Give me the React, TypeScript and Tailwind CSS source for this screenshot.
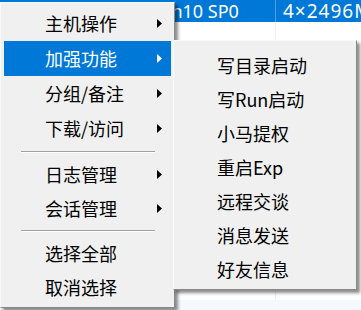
type Item = { label: string; sub?: boolean; active?: boolean } | "sep";

const mainItems: Item[] = [
  { label: "主机操作", sub: true },
  { label: "加强功能", sub: true, active: true },
  { label: "分组/备注", sub: true },
  { label: "下载/访问", sub: true },
  "sep",
  { label: "日志管理", sub: true },
  { label: "会话管理", sub: true },
  "sep",
  { label: "选择全部" },
  { label: "取消选择" },
];

const subItems = ["写目录启动", "写Run启动", "小马提权", "重启Exp", "远程交谈", "消息发送", "好友信息"];

function Arrow({ white }: { white?: boolean }) {
  return (
    <svg width="5" height="9" viewBox="0 0 5 9" className="ml-auto mr-[9px]">
      <path d="M0 0 L5 4.5 L0 9 Z" fill={white ? "#fff" : "#000"} />
    </svg>
  );
}

export default function App() {
  let row = 0;
  return (
    <div className="relative h-[310px] w-[361px] overflow-hidden bg-white font-['Noto_Sans',sans-serif]">
      {/* list behind the menus */}
      <div className="flex h-[22px] bg-[#0078d7] text-[18px] leading-[22px] text-white">
        <div className="w-[275px] whitespace-nowrap pl-[150px]">Win10 SP0</div>
        <div className="w-px bg-[#4da0e3]" />
        <div className="flex-1 overflow-hidden whitespace-nowrap pl-[7px] text-[19px] tracking-[1px]">4×2496MB</div>
      </div>
      <div className="flex h-[278px]">
        <div className="w-[275px]" />
        <div className="w-px bg-[#f0f0f0]" />
        <div className="flex-1" />
      </div>
      <div className="h-[10px] bg-[#f5f8fc]" />

      {/* main context menu */}
      <div className="absolute left-0 top-[2px] w-[175px] border border-b-[#8a8a8a] border-l-[#fafafa] border-r-[#8a8a8a] border-t-[#fafafa] bg-[#f0f0f0] p-[3px] font-['Noto_Sans_CJK_SC',sans-serif] text-[18px] shadow-[3px_3px_3px_rgba(0,0,0,0.45)]">
        {mainItems.map((it, i) => {
          if (it === "sep") {
            return (
              <div key={i} className="flex h-[11px] flex-col justify-center px-[17px] pr-[16px]">
                <div className="h-px bg-[#a0a0a0]" />
                <div className="h-px bg-white" />
              </div>
            );
          }
          row++;
          return (
            <div
              key={i}
              className={
                (row <= 4 ? "h-[35px] " : "h-[34px] ") +
                "flex items-center pl-[41px] " +
                (it.active ? "bg-[#0078d7] text-white" : "text-black")
              }
            >
              <span>{it.label}</span>
              {it.sub && <Arrow white={it.active} />}
            </div>
          );
        })}
      </div>

      {/* submenu */}
      <div className="absolute left-[173px] top-[40px] w-[184px] border border-b-[#8a8a8a] border-l-[#fafafa] border-r-[#8a8a8a] border-t-[#fafafa] bg-[#f0f0f0] px-[3px] pb-[3px] pt-[7px] font-['Noto_Sans_CJK_SC',sans-serif] text-[18px] text-black shadow-[3px_3px_3px_rgba(0,0,0,0.45)]">
        {subItems.map((s) => (
          <div key={s} className="flex h-[34px] items-center pl-[40px]">
            {s}
          </div>
        ))}
      </div>
    </div>
  );
}
